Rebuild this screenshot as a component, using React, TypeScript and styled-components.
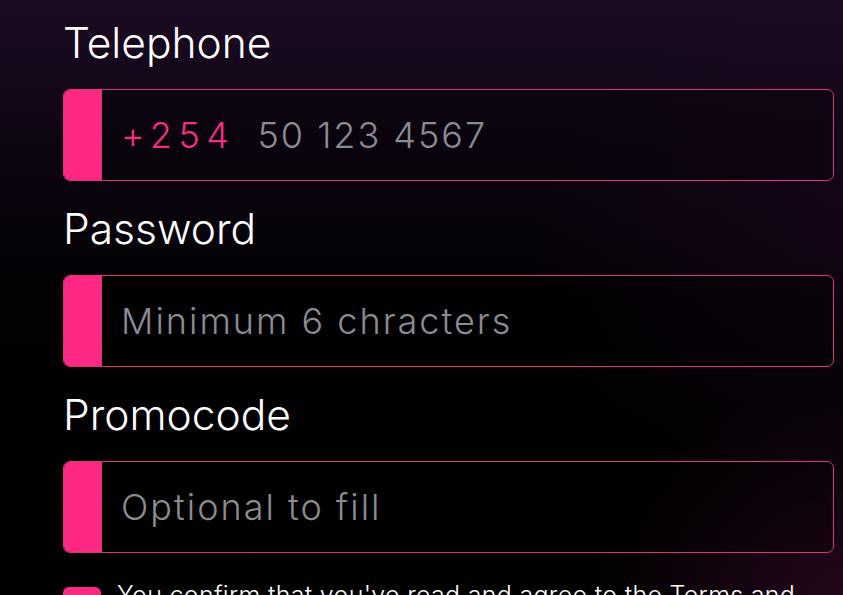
import React, { useState } from 'react'
import styled, { createGlobalStyle } from 'styled-components'

const GlobalStyle = createGlobalStyle`
  html, body {
    margin: 0;
    padding: 0;
    background: #000;
  }
  body {
    font-family: Inter, "Noto Sans", "Liberation Sans", sans-serif;
    color: #fff;
  }
`

const Page = styled.div`
  height: 595px;
  box-sizing: border-box;
  padding: 18px 9px 0 63px;
  overflow: hidden;
  background:
    radial-gradient(ellipse 360px 300px at 100% 100%, rgba(70, 14, 56, 0.5), rgba(0, 0, 0, 0) 70%),
    radial-gradient(ellipse 420px 340px at 100% 40%, rgba(36, 8, 38, 0.45), rgba(0, 0, 0, 0) 75%),
    linear-gradient(180deg, #1c0b23 0%, #0d0512 26%, #020103 50%, #000 100%);
`

const Form = styled.form`
  display: flex;
  flex-direction: column;
  width: 771px;
`

const Field = styled.div`
  display: flex;
  flex-direction: column;
  gap: 21px;
  margin-bottom: 23px;
`

const Label = styled.label`
  font-size: 42.5px;
  font-weight: 300;
  line-height: 50px;
  color: #fff;
`

const InputBox = styled.div`
  display: flex;
  align-items: center;
  height: 92px;
  box-sizing: border-box;
  border: 1px solid #dd3474;
  border-radius: 7px;
  overflow: hidden;
  background: rgba(0, 0, 0, 0.25);
`

const Strip = styled.span`
  align-self: stretch;
  width: 37px;
  flex-shrink: 0;
  background: #ff2882;
  border-right: 1px solid #dd3474;
`

const Prefix = styled.span`
  margin-left: 19px;
  font-size: 36px;
  font-weight: 300;
  letter-spacing: 6.5px;
  color: #f0307f;
  margin-right: 22px;
`

const TextInput = styled.input<{ $inset?: boolean }>`
  flex: 1;
  min-width: 0;
  height: 100%;
  border: 0;
  outline: none;
  background: transparent;
  padding: 0 0 0 ${({ $inset }) => ($inset ? '19px' : '0')};
  font-family: inherit;
  font-size: 36px;
  font-weight: 300;
  letter-spacing: 2px;
  color: #d8d8dc;

  &::placeholder {
    color: #8c8b91;
    opacity: 1;
  }
`

const ConsentRow = styled.label`
  display: flex;
  align-items: flex-start;
  gap: 16px;
  margin-top: 9px;
`

const Check = styled.span`
  width: 38px;
  height: 38px;
  flex-shrink: 0;
  margin-top: 2px;
  border-radius: 6px;
  background: #ff2882;
`

const ConsentText = styled.span`
  max-width: 700px;
  font-size: 25px;
  font-weight: 300;
  letter-spacing: 0.3px;
  line-height: 32px;
  margin-top: -6px;
  color: #fff;
`

const App: React.FC = () => {
  const [phone, setPhone] = useState('')
  const [password, setPassword] = useState('')
  const [promo, setPromo] = useState('')

  return (
    <>
      <GlobalStyle />
      <Page>
        <Form onSubmit={(e) => e.preventDefault()}>
          <Field>
            <Label htmlFor="phone">Telephone</Label>
            <InputBox>
              <Strip />
              <Prefix>+254</Prefix>
              <TextInput
                id="phone"
                type="tel"
                placeholder="50 123 4567"
                value={phone}
                onChange={(e) => setPhone(e.target.value)}
              />
            </InputBox>
          </Field>

          <Field>
            <Label htmlFor="password">Password</Label>
            <InputBox>
              <Strip />
              <TextInput
                $inset
                id="password"
                type="password"
                placeholder="Minimum 6 chracters"
                value={password}
                onChange={(e) => setPassword(e.target.value)}
              />
            </InputBox>
          </Field>

          <Field>
            <Label htmlFor="promo">Promocode</Label>
            <InputBox>
              <Strip />
              <TextInput
                $inset
                id="promo"
                type="text"
                placeholder="Optional to fill"
                value={promo}
                onChange={(e) => setPromo(e.target.value)}
              />
            </InputBox>
          </Field>

          <ConsentRow>
            <Check />
            <ConsentText>
              You confirm that you've read and agree to the Terms and Conditions and Privacy Policy
            </ConsentText>
          </ConsentRow>
        </Form>
      </Page>
    </>
  )
}

export default App
